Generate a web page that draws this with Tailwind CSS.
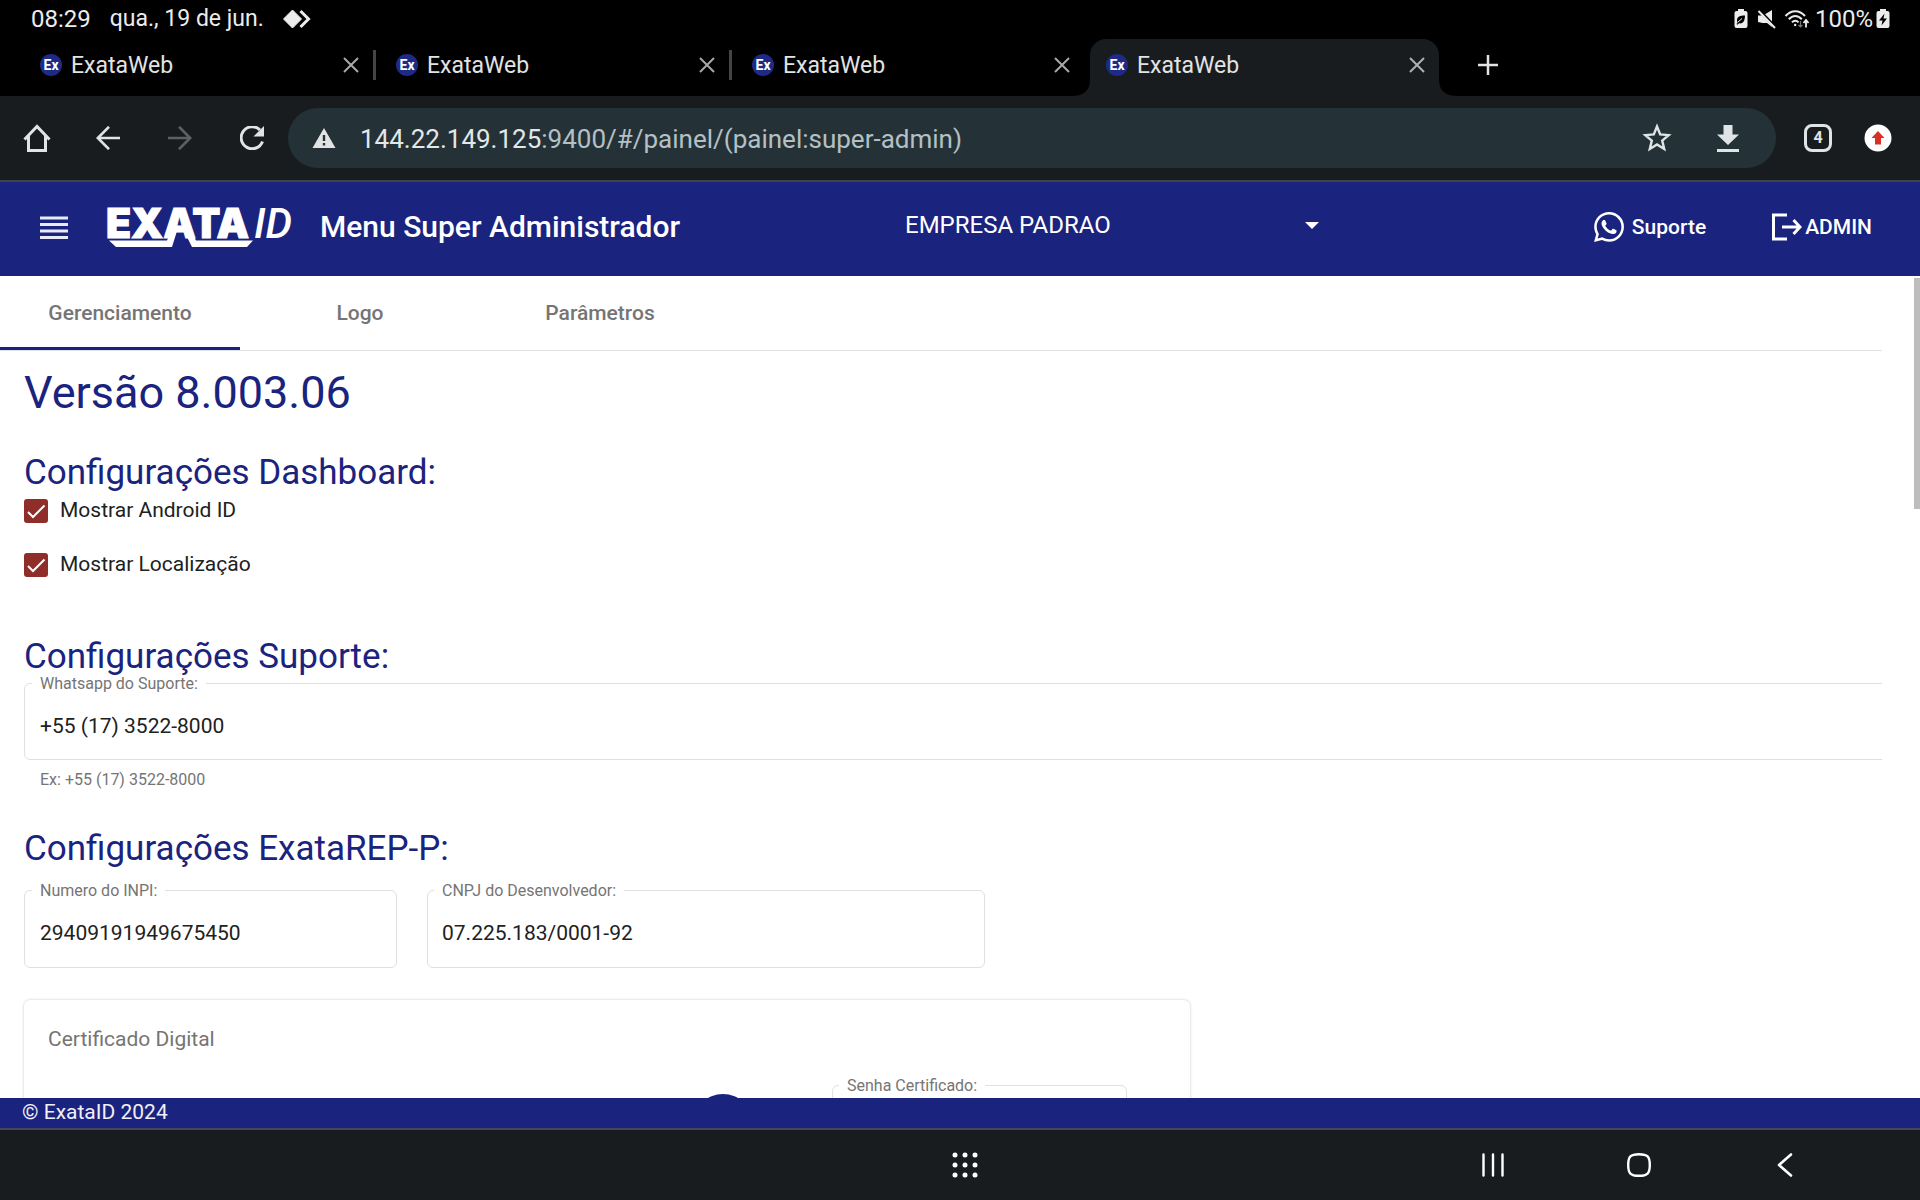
<!DOCTYPE html>
<html lang="pt-BR">
<head>
<meta charset="utf-8">
<meta name="viewport" content="width=device-width, initial-scale=1">
<title>ExataWeb</title>
<script src="https://cdn.jsdelivr.net/npm/@tailwindcss/browser@4"></script>
</head>
<body class="flex h-screen flex-col overflow-hidden bg-white font-['Roboto',sans-serif] text-[21px] leading-6 text-[#212121]">

<!-- Device status bar -->
<div class="flex h-[39px] shrink-0 items-center justify-between bg-black pr-[30px] pb-[2px] pl-[31px] text-2xl leading-9 text-[#ececec]">
  <div class="flex items-center">
    <span class="mr-[19px]">08:29</span>
    <span class="mr-[19px] text-[23px]">qua., 19 de jun.</span>
    <svg class="h-5 w-7" viewBox="0 0 28 20" fill="none"><path d="M9.500 1 18.500 10 9.500 19 .5 10Z" fill="#ececec" stroke="#ececec" stroke-linejoin="round"/><path d="m17.500 2 8 8-8 8" stroke="#ececec" stroke-width="3"/></svg>
  </div>
  <div class="flex items-center">
    <svg class="mr-[9px] h-5 w-[14px]" viewBox="0 0 14 20"><path d="M4 0h6v2h1.500A2 2 0 0 1 13.500 4v13a2 2 0 0 1-2 2h-9a2 2 0 0 1-2-2V4a2 2 0 0 1 2-2H4Z" fill="#ececec"/><path d="M11 6.500c-5 0-8 1-8 5 0 1 .4 1.600.8 2L2.500 15l1 .8 1.400-1.500c4.500 1 6-2.800 6.100-7.800Z" fill="#000"/><path d="m4 13 4-3.500" stroke="#ececec"/></svg>
    <svg class="mr-[7px] h-5 w-5" viewBox="0 0 20 20"><path d="M1 6.500h5L15 1v17l-5-4H5.500L1 13Z" fill="#ececec"/><path d="m2 1 17 18" stroke="#000" stroke-width="3"/><path d="m1.500 2 16.500 17" stroke="#ececec" stroke-width="2"/></svg>
    <svg class="mr-[5px] h-5 w-[26px]" viewBox="0 0 26 20" fill="none" stroke="#ececec" stroke-width="2"><path d="M1.500 7c5.600-6.500 14-6.500 19.500 0M4.800 10.200c4-4.300 9-4.300 13 0M8 13.300c2-2.200 4.500-2.200 6.500 0"/><circle cx="11.200" cy="16" r="1.200" fill="#ececec" stroke="none"/><path d="M22 18.500v-7m-2.500 2.500 2.500-3 2.500 3" stroke-width="1.800"/><path d="M16.500 12v6m-2-2 2 2 2-2" stroke="#777" stroke-width="1.200"/></svg>
    <span class="mr-[3px]">100%</span>
    <svg class="h-5 w-[14px]" viewBox="0 0 14 20"><path d="M4 0h6v2h1.500A2 2 0 0 1 13.500 4v13a2 2 0 0 1-2 2h-9a2 2 0 0 1-2-2V4a2 2 0 0 1 2-2H4Z" fill="#ececec"/><path d="M8.500 4.500 3 11.500h3.500L5.500 16.500 11 9.500H7.500Z" fill="#000"/></svg>
  </div>
</div>

<!-- Browser tab strip -->
<nav aria-label="Abas" class="flex h-[57px] shrink-0 items-stretch bg-black pb-[6px] pl-5 text-[23px] text-[#e3e3e3]">
  <div class="flex w-[356px] items-center pl-5">
    <svg class="mr-[9px] h-[22px] w-[22px]" viewBox="0 0 22 22"><circle cx="11" cy="11" r="11" fill="#1f2a86"/><text x="11" y="16" text-anchor="middle" font-family="Roboto" font-weight="700" font-size="14" fill="#fff">Ex</text></svg>
    <span class="flex-1 pt-[2px]">ExataWeb</span>
    <button aria-label="Fechar aba" class="mr-[14px]"><svg class="h-4 w-4" viewBox="0 0 16 16" stroke="#a8a8a8" stroke-width="2"><path d="m1 1 14 14M15 1 1 15"/></svg></button>
    <span class="h-[30px] w-[3px] bg-[#444]"></span>
  </div>
  <div class="flex w-[356px] items-center pl-5">
    <svg class="mr-[9px] h-[22px] w-[22px]" viewBox="0 0 22 22"><circle cx="11" cy="11" r="11" fill="#1f2a86"/><text x="11" y="16" text-anchor="middle" font-family="Roboto" font-weight="700" font-size="14" fill="#fff">Ex</text></svg>
    <span class="flex-1 pt-[2px]">ExataWeb</span>
    <button aria-label="Fechar aba" class="mr-[14px]"><svg class="h-4 w-4" viewBox="0 0 16 16" stroke="#a8a8a8" stroke-width="2"><path d="m1 1 14 14M15 1 1 15"/></svg></button>
    <span class="h-[30px] w-[3px] bg-[#444]"></span>
  </div>
  <div class="flex w-[340px] items-center pl-5">
    <svg class="mr-[9px] h-[22px] w-[22px]" viewBox="0 0 22 22"><circle cx="11" cy="11" r="11" fill="#1f2a86"/><text x="11" y="16" text-anchor="middle" font-family="Roboto" font-weight="700" font-size="14" fill="#fff">Ex</text></svg>
    <span class="flex-1 pt-[2px]">ExataWeb</span>
    <button aria-label="Fechar aba" class="mr-[2px]"><svg class="h-4 w-4" viewBox="0 0 16 16" stroke="#a8a8a8" stroke-width="2"><path d="m1 1 14 14M15 1 1 15"/></svg></button>
  </div>
  <div class="-mb-[6px] flex">
    <svg class="h-4 w-[18px] self-end" viewBox="0 0 18 16"><path d="M18 0v16H0C12 16 18 10 18 0Z" fill="#181c1f"/></svg>
    <div class="flex w-[349px] items-center rounded-t-2xl bg-[#181c1f] pr-[14px] pb-[6px] pl-4">
      <svg class="mr-[9px] h-[22px] w-[22px]" viewBox="0 0 22 22"><circle cx="11" cy="11" r="11" fill="#1f2a86"/><text x="11" y="16" text-anchor="middle" font-family="Roboto" font-weight="700" font-size="14" fill="#fff">Ex</text></svg>
      <span class="flex-1 pt-[2px]">ExataWeb</span>
      <button aria-label="Fechar aba"><svg class="h-4 w-4" viewBox="0 0 16 16" stroke="#b0b0b0" stroke-width="2"><path d="m1 1 14 14M15 1 1 15"/></svg></button>
    </div>
    <svg class="h-4 w-[18px] self-end" viewBox="0 0 18 16"><path d="M0 0v16H18C6 16 0 10 0 0Z" fill="#181c1f"/></svg>
  </div>
  <button aria-label="Nova aba" class="ml-[21px]"><svg class="h-5 w-5" viewBox="0 0 20 20" stroke="#e3e3e3" stroke-width="2.500"><path d="M10 0v20M0 10h20"/></svg></button>
</nav>

<!-- Browser toolbar -->
<div class="flex h-[86px] shrink-0 items-center border-b-2 border-[#3c4648] bg-[#181c1f] pr-7 pl-[23px]">
  <button aria-label="Página inicial" class="mr-[45px]"><svg class="h-7 w-7" viewBox="0 0 28 28" fill="none" stroke="#e3e3e3" stroke-width="3"><path d="M1.500 15.500 14 2.500l12.500 13M5.500 12v14.500h17V12"/></svg></button>
  <button aria-label="Voltar" class="mr-12"><svg class="h-6 w-6" viewBox="0 0 24 24" fill="none" stroke="#e3e3e3" stroke-width="2.600"><path d="M24 12H2M13 .8 1.800 12 13 23.200"/></svg></button>
  <button aria-label="Avançar" class="mr-12"><svg class="h-6 w-6" viewBox="0 0 24 24" fill="none" stroke="#5d6164" stroke-width="2.600"><path d="M0 12h22M11 .8 22.200 12 11 23.200"/></svg></button>
  <button aria-label="Recarregar" class="mr-6"><svg class="h-6 w-6" viewBox="0 0 24 24" fill="none"><path d="M22.500 15.500A11 11 0 1 1 20 4" stroke="#e3e3e3" stroke-width="3"/><path d="M24 0v10.500H13.500Z" fill="#e3e3e3"/></svg></button>
  <div class="mr-7 flex h-[60px] flex-1 items-center rounded-full bg-[#243238] pr-[36px] pl-6">
    <svg class="mr-6 h-5 w-6" viewBox="0 0 24 20"><path d="M12 0 23.500 20H.5Z" fill="#e3e3e3"/><path d="M12 7v6m0 2v2.500" stroke="#243238" stroke-width="2.400"/></svg>
    <div role="textbox" aria-label="Endereço" class="flex-1 pt-[2px] text-[26px] leading-8 text-[#b4c0c4]"><span class="text-[#e3e7e8]">144.22.149.125</span>:9400/#/painel/(painel:super-admin)</div>
    <button aria-label="Favoritar" class="mr-11"><svg class="h-[30px] w-[30px]" viewBox="0 0 30 30" fill="none" stroke="#dfe5e7" stroke-width="2.400"><path d="m15 3.500 3.200 7.900 8.500.7-6.500 5.500 2 8.300L15 21.400l-7.200 4.500 2-8.300-6.500-5.500 8.500-.7Z"/></svg></button>
    <button aria-label="Downloads"><svg class="h-7 w-6" viewBox="0 0 24 28" fill="#dfe5e7"><path d="M7.500 1h9v9.500H23L12 21 1 10.500h6.500ZM1 25h22v3H1Z"/></svg></button>
  </div>
  <button aria-label="4 abas abertas" class="mr-8 flex h-7 w-7 items-center justify-center rounded-lg border-3 border-[#dfe5e7] text-base font-bold text-[#e3e3e3]">4</button>
  <button aria-label="Atualizar navegador"><svg class="h-7 w-7" viewBox="0 0 28 28"><circle cx="14" cy="14" r="13.500" fill="#fff"/><path d="m14 7 6.500 7H17v6.500h-6V14H7.500Z" fill="#d93025"/></svg></button>
</div>

<!-- Application header -->
<header class="flex h-[94px] shrink-0 items-center justify-between bg-[#1a237e] pr-12 pb-1 pl-10 text-white">
  <div class="flex items-center">
    <button aria-label="Menu" class="mr-10"><svg class="h-6 w-7" viewBox="0 0 28 24" stroke="#e8eaf6" stroke-width="3"><path d="M0 3h28M0 9.500h28M0 16h28M0 22.500h28"/></svg></button>
    <svg class="mr-[22px] h-10 w-[190px] overflow-visible" viewBox="0 0 190 40" fill="#fff" role="img" aria-label="Exata ID">
      <text x="-2" y="31" font-family="Inter" font-weight="900" font-size="41" stroke="#fff" stroke-width="1">EXATA</text>
      <text x="146" y="31" font-family="Roboto" font-style="italic" font-weight="500" font-size="42">ID</text>
      <path d="M1 33.500H59L63 24H69L64 40H8ZM76 24H83L88 33.500H145L139 40H84Z"/>
    </svg>
    <h1 class="text-[30px] leading-9 font-medium">Menu Super Administrador</h1>
  </div>
  <div class="relative w-[464px] pb-1">
    <select aria-label="Empresa" class="w-[416px] appearance-none bg-transparent text-2xl leading-8"><option>EMPRESA PADRAO</option></select>
    <svg class="pointer-events-none absolute top-[13px] left-[400px] h-[7px] w-[14px]" viewBox="0 0 14 7" fill="#fff"><path d="M0 0h14L7 7Z"/></svg>
  </div>
  <div class="flex items-center font-medium">
    <a href="#suporte" class="mr-[66px] flex items-center gap-2"><svg class="h-[30px] w-[30px]" viewBox="0 0 24 24" fill="#fff"><path d="M17.472 14.382c-.297-.149-1.758-.867-2.030-.967-.273-.099-.471-.148-.67.150-.197.297-.767.966-.94 1.164-.173.199-.347.223-.644.075-.297-.150-1.255-.463-2.390-1.475-.883-.788-1.480-1.761-1.653-2.059-.173-.297-.018-.458.130-.606.134-.133.298-.347.446-.520.149-.174.198-.298.298-.497.099-.198.050-.371-.025-.520-.075-.149-.669-1.612-.916-2.207-.242-.579-.487-.5-.669-.510-.173-.008-.371-.010-.570-.010-.198 0-.520.074-.792.372-.272.297-1.040 1.016-1.040 2.479 0 1.462 1.065 2.875 1.213 3.074.149.198 2.096 3.200 5.077 4.487.709.306 1.262.489 1.694.625.712.227 1.360.195 1.871.118.571-.085 1.758-.719 2.006-1.413.248-.694.248-1.289.173-1.413-.074-.124-.272-.198-.570-.347m-5.421 7.403h-.004a9.870 9.870 0 0 1-5.031-1.378l-.361-.214-3.741.982.998-3.648-.235-.374a9.860 9.860 0 0 1-1.510-5.260c.001-5.450 4.436-9.884 9.888-9.884 2.640 0 5.122 1.030 6.988 2.898a9.825 9.825 0 0 1 2.893 6.994c-.003 5.450-4.437 9.884-9.885 9.884m8.413-18.297A11.815 11.815 0 0 0 12.050 0C5.495 0 .160 5.335.157 11.892c0 2.096.547 4.142 1.588 5.945L.057 24l6.305-1.654a11.882 11.882 0 0 0 5.683 1.448h.005c6.554 0 11.890-5.335 11.893-11.893a11.821 11.821 0 0 0-3.480-8.413Z"/></svg>Suporte</a>
    <a href="#sair" class="flex items-center gap-[3px]"><svg class="h-7 w-[30px]" viewBox="0 0 30 28" fill="none" stroke="#fff" stroke-width="3"><path d="M15 2H1.500v24H15M10 14h18M21.500 7l6.500 7-6.500 7"/></svg>ADMIN</a>
  </div>
</header>

<!-- Scrollable page content -->
<main class="relative min-h-0 flex-1 overflow-hidden">
  <div class="mr-[38px] overflow-hidden">
    <div role="tablist" class="flex h-[75px] border-b border-[#e0e0e0] font-medium text-[#757575]">
      <button role="tab" aria-selected="true" class="w-60 border-b-3 border-[#1a237e] pt-[2px]">Gerenciamento</button>
      <button role="tab" aria-selected="false" class="w-60 border-b-3 border-transparent pt-[2px]">Logo</button>
      <button role="tab" aria-selected="false" class="w-60 border-b-3 border-transparent pt-[2px]">Parâmetros</button>
    </div>

    <div class="pt-[15px] pl-6">
      <h2 class="text-[45px] leading-[54px] text-[#1a237e]">Versão 8.003.06</h2>

      <h3 class="mt-[35px] text-[35px] leading-9 text-[#1a237e]">Configurações Dashboard:</h3>
      <div class="mt-2 flex flex-col items-start gap-[30px] leading-[22px]">
        <label class="flex items-start gap-3"><span class="grid h-6 w-6"><input type="checkbox" checked class="col-start-1 row-start-1 h-6 w-6 appearance-none rounded-[3px] bg-[#8f2d29]"><svg class="pointer-events-none col-start-1 row-start-1 h-6 w-6" viewBox="0 0 24 24" fill="none" stroke="#fff" stroke-width="2"><path d="m4 13 5 5L20.500 6.500"/></svg></span>Mostrar Android ID</label>
        <label class="flex items-start gap-3"><span class="grid h-6 w-6"><input type="checkbox" checked class="col-start-1 row-start-1 h-6 w-6 appearance-none rounded-[3px] bg-[#8f2d29]"><svg class="pointer-events-none col-start-1 row-start-1 h-6 w-6" viewBox="0 0 24 24" fill="none" stroke="#fff" stroke-width="2"><path d="m4 13 5 5L20.500 6.500"/></svg></span>Mostrar Localização</label>
      </div>

      <h3 class="mt-[62px] text-[35px] leading-9 text-[#1a237e]">Configurações Suporte:</h3>
      <fieldset class="-mt-[3px] -mr-6 h-[88px] rounded-md border border-[#e0e0e0] pl-[15px]">
        <legend class="-ml-2 px-2 pt-[2px] text-base leading-5 text-[#757575]"><label for="whatsapp">Whatsapp do Suporte:</label></legend>
        <input id="whatsapp" value="+55 (17) 3522-8000" class="mt-5 w-full outline-none">
      </fieldset>
      <p class="mt-[10px] pl-4 text-base leading-5 text-[#757575]">Ex: +55 (17) 3522-8000</p>

      <h3 class="mt-[41px] text-[35px] leading-9 text-[#1a237e]">Configurações ExataREP-P:</h3>
      <div class="mt-3 flex gap-[30px]">
        <fieldset class="h-[89px] w-[373px] rounded-md border border-[#e0e0e0] px-[15px]">
          <legend class="-ml-2 px-2 pt-[2px] text-base leading-5 text-[#757575]"><label for="inpi">Numero do INPI:</label></legend>
          <input id="inpi" value="29409191949675450" class="mt-5 w-full outline-none">
        </fieldset>
        <fieldset class="h-[89px] w-[558px] rounded-md border border-[#e0e0e0] px-[14px]">
          <legend class="-ml-2 px-2 pt-[2px] text-base leading-5 text-[#757575]"><label for="cnpj">CNPJ do Desenvolvedor:</label></legend>
          <input id="cnpj" value="07.225.183/0001-92" class="mt-5 w-full outline-none">
        </fieldset>
      </div>

      <section class="mt-8 w-[1166px] rounded-md px-6 pt-[27px] pb-6 shadow-[0_0_3px_rgba(0,0,0,0.22)]">
        <h4 class="text-[#757575]">Certificado Digital</h4>
        <div class="mt-[23px] flex items-start pl-[645px]">
          <button aria-label="Enviar certificado" class="mt-5 mr-[79px] h-[60px] w-[60px] shrink-0 rounded-full bg-[#1a237e] shadow-lg"></button>
          <fieldset class="h-[88px] w-[295px] shrink-0 rounded-md border border-[#e0e0e0] px-[14px]">
            <legend class="-ml-2 px-2 pt-[2px] text-base leading-5 text-[#757575]"><label for="senha">Senha Certificado:</label></legend>
            <input id="senha" type="password" class="mt-5 w-full outline-none">
          </fieldset>
        </div>
      </section>
    </div>
  </div>
  <div class="absolute top-[2px] right-0 h-[231px] w-[6px] bg-[#bdbdbd]"></div>
</main>

<footer class="flex h-8 shrink-0 items-center border-b-2 border-[#42465f] bg-[#1a237e] pb-[2px] pl-[22px] text-[#f0f0f5]">© ExataID 2024</footer>

<!-- Device navigation bar -->
<nav aria-label="Navegação do dispositivo" class="grid h-[70px] shrink-0 grid-cols-[1fr_auto_1fr] items-center bg-[#181c1f] pr-[123px]">
  <button aria-label="Aplicativos" class="col-start-2 ml-[133px]"><svg class="h-7 w-7" viewBox="0 0 28 28" fill="#fff"><circle cx="4" cy="4" r="2.500"/><circle cx="14" cy="4" r="2.500"/><circle cx="24" cy="4" r="2.500"/><circle cx="4" cy="14" r="2.500"/><circle cx="14" cy="14" r="2.500"/><circle cx="24" cy="14" r="2.500"/><circle cx="4" cy="24" r="2.500"/><circle cx="14" cy="24" r="2.500"/><circle cx="24" cy="24" r="2.500"/></svg></button>
  <div class="flex justify-end gap-[122px]">
    <button aria-label="Recentes"><svg class="h-6 w-6" viewBox="0 0 24 24" stroke="#fff" stroke-width="2.400" stroke-linecap="round"><path d="M2.500 1.500v21M12 1.500v21M21.500 1.500v21"/></svg></button>
    <button aria-label="Início"><svg class="h-6 w-6" viewBox="0 0 24 24" fill="none" stroke="#fff" stroke-width="2.400"><path d="M12 1.200c8.500 0 10.800 2.300 10.800 10.800S20.500 22.800 12 22.800 1.200 20.500 1.200 12 3.500 1.200 12 1.200Z"/></svg></button>
    <button aria-label="Voltar"><svg class="h-6 w-6" viewBox="0 0 24 24" fill="none" stroke="#fff" stroke-width="2.600" stroke-linecap="round" stroke-linejoin="round"><path d="M18 1.500 6 12l12 10.500"/></svg></button>
  </div>
</nav>
</body>
</html>
